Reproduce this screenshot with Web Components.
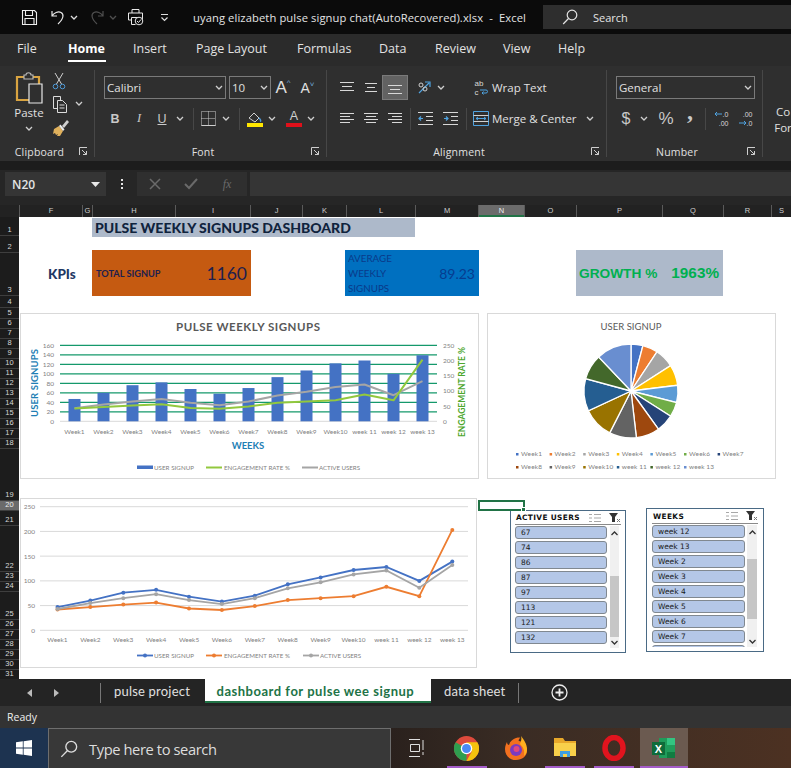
<!DOCTYPE html>
<html lang="en">
<head>
<meta charset="utf-8">
<title>Excel dashboard</title>
<style>
  html, body { margin: 0; height: 768px; overflow: hidden; background: #1e1e1e; font-family: "Open Sans", "Liberation Sans", sans-serif; }
</style>
</head>
<body>
<xl-title-bar></xl-title-bar>
<xl-menu-bar></xl-menu-bar>
<xl-ribbon></xl-ribbon>
<xl-formula-bar></xl-formula-bar>
<xl-column-heads></xl-column-heads>
<xl-sheet>
  <xl-slicer slot="slicer-a" heading="ACTIVE USERS" head-h="13" item-w="92" sb-gap="3" sb-w="9" thumb-top="50" thumb-h="61" pad="4">
    <xl-slicer-item>67</xl-slicer-item><xl-slicer-item>74</xl-slicer-item><xl-slicer-item>86</xl-slicer-item><xl-slicer-item>87</xl-slicer-item><xl-slicer-item>97</xl-slicer-item><xl-slicer-item>113</xl-slicer-item><xl-slicer-item>121</xl-slicer-item><xl-slicer-item>132</xl-slicer-item>
  </xl-slicer>
  <xl-slicer slot="slicer-b" heading="WEEKS" head-h="14" item-w="93" sb-gap="2" sb-w="10" thumb-top="34" thumb-h="60" pad="5">
    <xl-slicer-item>week 12</xl-slicer-item><xl-slicer-item>week 13</xl-slicer-item><xl-slicer-item>Week 2</xl-slicer-item><xl-slicer-item>Week 3</xl-slicer-item><xl-slicer-item>Week 4</xl-slicer-item><xl-slicer-item>Week 5</xl-slicer-item><xl-slicer-item>Week 6</xl-slicer-item><xl-slicer-item>Week 7</xl-slicer-item><xl-slicer-item></xl-slicer-item>
  </xl-slicer>
</xl-sheet>
<xl-sheet-tabs></xl-sheet-tabs>
<xl-status-bar></xl-status-bar>
<xl-taskbar></xl-taskbar>

<script>
const WEEKS = ["Week1","Week2","Week3","Week4","Week5","Week6","Week7","Week8","Week9","Week10","week 11","week 12","week 13"];
const SIGNUPS = [47,60,76,82,68,58,70,93,107,122,128,100,139];
const ENGAGE = [42,47,52,56,44,41,49,61,65,69,88,69,203];
const ACTIVE = [43,55,65,73,61,53,65,85,97,113,121,86,132];
const PIE_COLORS = ["#4472c4","#ed7d31","#a5a5a5","#ffc000","#5b9bd5","#70ad47","#264478","#9e480e","#636363","#997300","#255e91","#43682b","#698ed0"];
const CHART_FONT = `font-family="Lato, 'Liberation Sans', sans-serif"`;

const chev = (c = "#cfcfcf") => `<svg width="8" height="5" viewBox="0 0 8 5"><path d="M1 1l3 3 3-3" fill="none" stroke="${c}" stroke-width="1.3"/></svg>`;
const launcher = `<svg width="9" height="9" viewBox="0 0 9 9" fill="none" stroke="#cfcfcf"><path d="M.5 8V.5H8M3 3l4.5 4.5M7.5 4v3.5H4"/></svg>`;
const searchIcon = (s, c) => `<svg width="${s}" height="${s}" viewBox="0 0 16 16" fill="none" stroke="${c}" stroke-width="1.2"><circle cx="10" cy="6" r="4.8"/><path d="M6.5 9.5L1.2 15"/></svg>`;
const lines = (rows) => `<svg width="14" height="14" viewBox="0 0 14 14" stroke="#d8d8d8">${rows.map(([x1, x2, y]) => `<path d="M${x1} ${y}.5H${x2}"/>`).join("")}</svg>`;

// title bar: quick access icons, file name and search box
class XlTitleBar extends HTMLElement {
  constructor() { super(); this.attachShadow({ mode: "open" }); }
  connectedCallback() {
    this.shadowRoot.innerHTML = `
      <style>
        :host { display: flex; align-items: center; height: 34px; background: #0b0b0b; color: #e4e4e4; font-size: 11.2px; box-sizing: border-box; padding-left: 20px; overflow: hidden; }
        .c { display: flex; align-items: center; justify-content: center; flex: none; }
        .name { width: 350px; white-space: nowrap; letter-spacing: .1px; flex: none; }
        .search { flex: 1; height: 24px; background: #2e2e2e; display: flex; align-items: center; padding-left: 19px; gap: 15px; color: #e4e4e4; font-size: 11px; }
      </style>
      <span class="c" style="width:18px"><svg width="17" height="17" viewBox="0 0 17 17" fill="none" stroke="#eee" stroke-width="1.1"><path d="M1.5 1.5h12l2 2v12h-14zM4.5 1.5v5h7v-5M4 15.5v-6h9v6"/></svg></span>
      <span class="c" style="width:22px;margin-left:9px"><svg width="16" height="17" viewBox="0 0 16 17" fill="none" stroke="#e8e8e8" stroke-width="1.2"><path d="M2 2v5h5M2 7c2-3 6-5 9-3.500s3 6-3 11.500"/></svg></span>
      <span class="c" style="width:10px">${chev("#ddd")}</span>
      <span class="c" style="width:22px;margin-left:7px"><svg width="16" height="17" viewBox="0 0 16 17" fill="none" stroke="#4f4f4f" stroke-width="1.2"><path d="M14 2v5H9M14 7c-2-3-6-5-9-3.500S2 9.500 8 15"/></svg></span>
      <span class="c" style="width:10px">${chev("#4f4f4f")}</span>
      <span class="c" style="width:18px;margin-left:9px"><svg width="18" height="18" viewBox="0 0 18 18" fill="none" stroke="#e8e8e8"><path d="M5 5V1.500h7V5M1.500 5h14v7h-3M1.500 5v7h3M4.500 9.500h7"/><circle cx="12" cy="13" r="3.800" fill="#0b0b0b"/><path d="M10 13l1.500 1.500 2.500-3M4.500 9.500v7h4"/></svg></span>
      <span class="c" style="width:10px;margin-left:14px"><svg width="9" height="9" viewBox="0 0 9 9" fill="none" stroke="#ddd" stroke-width="1.200"><path d="M1 1.500h7M1.500 4.500l3 3 3-3"/></svg></span>
      <span class="name" style="margin-left:24px">uyang elizabeth pulse signup chat(AutoRecovered).xlsx &nbsp;-&nbsp; Excel</span>
      <div class="search"><span class="c">${searchIcon(16, "#e4e4e4")}</span><span>Search</span></div>
    `;
  }
}

// ribbon tab names
class XlMenuBar extends HTMLElement {
  constructor() { super(); this.attachShadow({ mode: "open" }); }
  connectedCallback() {
    const tabs = [["File", 51], ["Home", 65], ["Insert", 63], ["Page Layout", 101], ["Formulas", 82], ["Data", 56], ["Review", 68], ["View", 55], ["Help", 40]];
    this.shadowRoot.innerHTML = `
      <style>
        :host { display: flex; height: 32px; background: #2b2b2b; color: #e2e2e2; font-size: 12.5px; padding-left: 17px; box-sizing: border-box; }
        span { flex: none; line-height: 30px; white-space: nowrap; position: relative; }
        .on { font-weight: 700; color: #fff; }
        .on::after { content: ""; position: absolute; left: 0; width: 38px; top: 26px; height: 2px; background: #fff; }
      </style>
      ${tabs.map(([t, w]) => `<span style="width:${w}px" class="${t === "Home" ? "on" : ""}">${t}</span>`).join("")}
    `;
  }
}

// one group of the ribbon; the tools come in through the slot
class XlRibbonGroup extends HTMLElement {
  constructor() { super(); this.attachShadow({ mode: "open" }); }
  connectedCallback() {
    this.shadowRoot.innerHTML = `
      <style>
        :host { display: flex; flex-direction: column; flex: none; height: 95px; box-sizing: border-box; width: var(--w); position: relative; }
        :host::after { content: ""; position: absolute; right: 0; top: 4px; bottom: 4px; width: 1px; background: #474747; }
        .body { flex: 1; min-height: 0; padding-top: 10px; padding-left: var(--pad, 0); display: flex; flex-direction: column; gap: 8px; }
        .foot { display: grid; grid-template-columns: 1fr 16px; height: 19px; flex: none; box-sizing: border-box; padding-top: 3px; align-items: start; font-size: 10.5px; color: #e0e0e0; }
        .foot span { text-align: center; line-height: 14px; letter-spacing: .2px; }
        .foot i { display: block; line-height: 0; padding-top: 2px; }
      </style>
      <div class="body"><slot></slot></div>
      <div class="foot"><span>${this.getAttribute("label")}</span><i>${launcher}</i></div>
    `;
  }
}

class XlRibbon extends HTMLElement {
  constructor() { super(); this.attachShadow({ mode: "open" }); }
  connectedCallback() {
    const cell = (w, html = "", extra = "") => `<span class="c" style="width:${w}px;${extra}">${html}</span>`;
    const sep = (w) => `<span class="c" style="width:${w}px"><b class="sep"></b></span>`;
    const arrowBlue = `stroke="#4fa3e0" fill="none"`;
    this.shadowRoot.innerHTML = `
      <style>
        :host { display: flex; height: 95px; background: #2f2f2f; color: #e0e0e0; overflow: hidden; }
        .row { display: flex; align-items: center; height: 23px; font-size: 11.5px; white-space: nowrap; }
        .c { display: flex; align-items: center; justify-content: center; flex: none; height: 23px; }
        .sep { display: block; width: 1px; height: 22px; background: #474747; }
        .select { box-sizing: border-box; height: 23px; border: 1px solid #7a7a7a; display: flex; align-items: center; justify-content: space-between; padding: 0 2px; font-size: 11.5px; flex: none; }
        .clip { display: grid; grid-template-columns: 52px 34px; height: 66px; margin-top: -4px; }
        .paste { display: flex; flex-direction: column; align-items: center; padding-left: 6px; font-size: 11.5px; }
        .paste span { margin: 1px 0 5px; line-height: 16px; }
        .clip-tools { display: flex; flex-direction: column; align-items: flex-start; gap: 2px; margin-top: -2px; }
        .clip-tools div { display: flex; align-items: center; gap: 6px; height: 21px; }
        .bar { position: relative; display: flex; flex-direction: column; align-items: center; line-height: 1; }
        .a { font-family: "Liberation Sans", sans-serif; }
        .more { font-size: 11.5px; line-height: 16px; padding-top: 38px; flex: none; width: 40px; text-align: center; white-space: nowrap; }
        .mini { font-family: "Liberation Sans", sans-serif; font-size: 7px; line-height: 9px; display: block; text-align: right; color: #d8d8d8; }
      </style>
      <xl-ribbon-group style="--w:95px" label="Clipboard">
        <div class="clip">
          <div class="paste">
            <svg width="28" height="32" viewBox="0 0 28 32" fill="none">
              <path d="M2 5h22v23H2z" stroke="#d9a441" stroke-width="2.200"/>
              <path d="M9 7V3h2c0-3 5-3 5 0h2v4z" fill="#2f2f2f" stroke="#b8b8b8" stroke-width="1.200"/>
              <path d="M14 12h13v19H14z" fill="#2f2f2f" stroke="#e8e8e8" stroke-width="1.200"/>
            </svg>
            <span>Paste</span>${chev()}
          </div>
          <div class="clip-tools">
            <div><svg width="14" height="18" viewBox="0 0 14 18" fill="none" stroke="#cfcfcf"><path d="M3 1l6.500 11M11 1L4.500 12"/><circle cx="3.500" cy="14.500" r="2.300" stroke="#4f9bd9"/><circle cx="10.500" cy="14.500" r="2.300" stroke="#4f9bd9"/></svg></div>
            <div><svg width="17" height="18" viewBox="0 0 17 18" fill="none" stroke="#dcdcdc"><path d="M5 13.500H1.500v-12h7V5M5.500 5.500h5l4 4v8h-9zM7.500 10h5M7.500 13h5"/></svg>${chev()}</div>
            <div><svg width="18" height="18" viewBox="0 0 18 18"><path d="M2 11l5-3 4 5-3 5H5l1-2-2 1-1-2-2 1z" fill="#e0b15c"/><path d="M7 8l4 5 1.500-1.500-4-5z" fill="#eee"/><path d="M10 8l5-6 2 2-5 6z" fill="#d0d0d0"/></svg></div>
          </div>
        </div>
      </xl-ribbon-group>

      <xl-ribbon-group style="--w:232px;--pad:9px" label="Font">
        <div class="row">
          <div class="select" style="width:122px"><span>Calibri</span>${chev()}</div>
          <span style="width:3px"></span>
          <div class="select" style="width:42px"><span>10</span>${chev()}</div>
          ${cell(24, `<span class="a" style="font-size:17px">A<sup style="font-size:8px;color:#6fa8d8;vertical-align:8px">^</sup></span>`)}
          ${cell(25, `<span class="a" style="font-size:14px">A<sup style="font-size:8px;color:#6fa8d8;vertical-align:6px">˅</sup></span>`)}
        </div>
        <div class="row" style="margin-left:-1px">
          ${cell(24, `<b class="a" style="font-size:12.500px;color:#c9c9c9">B</b>`)}
          ${cell(24, `<i style="font:italic 12.500px 'Liberation Serif',serif;color:#c9c9c9">I</i>`)}
          ${cell(22, `<span class="a" style="font-size:12.500px;text-decoration:underline;color:#c9c9c9">U</span>`)}
          ${cell(14, chev())}${sep(12)}
          ${cell(18, `<svg width="15" height="15" viewBox="0 0 15 15" fill="none" stroke="#cfcfcf" stroke-dasharray="1 1"><path d="M.5.500h14v14H.500zM7.500.500v14M.500 7.500h14"/><path d="M.5 14.500h14" stroke-dasharray="none"/></svg>`)}
          ${cell(18, chev())}${sep(8)}
          ${cell(24, `<svg width="16" height="17" viewBox="0 0 16 17"><path d="M2 8l5-5 5 5-4 4z" fill="none" stroke="#d0d0d0"/><path d="M12 8c2 2 2 3 1 3.500" fill="none" stroke="#4f9bd9" stroke-width="1.500"/><rect y="13" width="16" height="4" fill="#ffe600"/></svg>`)}
          ${cell(10, chev())}${cell(5)}
          ${cell(24, `<span class="bar a" style="font-size:12.500px;color:#d0d0d0">A<i style="display:block;width:16px;height:4px;background:#e0101a;margin-top:1px"></i></span>`)}
          ${cell(10, chev())}
        </div>
      </xl-ribbon-group>

      <xl-ribbon-group style="--w:280px;--pad:8px" label="Alignment">
        <div class="row">
          ${cell(24, lines([[0, 14, 1], [2, 12, 5], [0, 14, 9]]))}
          ${cell(24, lines([[1, 13, 2], [3, 11, 6], [1, 13, 10]]))}
          ${cell(24, lines([[0, 14, 4], [2, 12, 8], [0, 14, 12]]), "background:#626262;outline:1px solid #7a7a7a")}
          ${cell(8)}
          ${cell(20, `<svg width="17" height="16" viewBox="0 0 17 16" fill="none"><path d="M2 13L12 3M8 2h5v5" stroke="#4fa3e0" stroke-width="1.200"/><circle cx="4" cy="5" r="2" stroke="#d0d0d0"/><circle cx="8" cy="9" r="2" stroke="#d0d0d0"/></svg>`)}
          ${cell(12, chev())}
          ${cell(25)}
          ${cell(18, `<span class="mini" style="font-size:8px;line-height:9px;text-align:left">ab<br>c<svg width="9" height="7" viewBox="0 0 9 7" ${arrowBlue}><path d="M1 2h6a1.500 1.500 0 0 1 0 3H3M4.500 3.500L3 5l1.500 1.500"/></svg></span>`)}
          <span style="margin-left:2px">Wrap Text</span>
        </div>
        <div class="row">
          ${cell(24, lines([[0, 14, 1], [0, 10, 4], [0, 14, 7], [0, 10, 10]]))}
          ${cell(24, lines([[0, 14, 1], [2, 12, 4], [0, 14, 7], [2, 12, 10]]))}
          ${cell(24, lines([[0, 14, 1], [4, 14, 4], [0, 14, 7], [4, 14, 10]]))}
          ${sep(6)}
          ${cell(24, `<svg width="15" height="13" viewBox="0 0 15 13" fill="none" stroke="#d8d8d8"><path d="M0 .5h15M8 4.500h7M8 8.500h7M0 12.500h15"/><path d="M5 6.500H1M3 4.500l-2 2 2 2" stroke="#4fa3e0" stroke-width="1.200"/></svg>`)}
          ${cell(1)}
          ${cell(24, `<svg width="15" height="13" viewBox="0 0 15 13" fill="none" stroke="#d8d8d8"><path d="M0 .5h15M8 4.500h7M8 8.500h7M0 12.500h15"/><path d="M1 6.500h4M3 4.500l2 2-2 2" stroke="#4fa3e0" stroke-width="1.200"/></svg>`)}
          ${sep(8)}
          ${cell(2)}
          ${cell(18, `<svg width="16" height="15" viewBox="0 0 16 15" fill="none"><path d="M.5.500h15v14H.500z" stroke="#4fa3e0"/><path d="M.5 4.500h15M.5 10.500h15" stroke="#d0d0d0"/><path d="M3 7.500h10M5 6l-2 1.500L5 9M11 6l2 1.500L11 9" stroke="#4fa3e0"/></svg>`)}
          <span style="margin-left:2px;width:94px">Merge &amp; Center</span>${chev()}
        </div>
      </xl-ribbon-group>

      <xl-ribbon-group style="--w:156px;--pad:9px" label="Number">
        <div class="row"><div class="select" style="width:139px"><span>General</span>${chev()}</div></div>
        <div class="row">
          ${cell(20, `<span class="a" style="font-size:16px;color:#c9c9c9">$</span>`)}
          ${cell(16, chev())}${cell(2)}
          ${cell(24, `<span class="a" style="font-size:17px;color:#c9c9c9">%</span>`)}
          ${cell(24, `<b style="font:700 24px/1 'Liberation Serif',serif;color:#c9c9c9;transform:translateY(-8px)">,</b>`)}
          ${sep(6)}${cell(1)}
          ${cell(24, `<span class="mini"><svg width="9" height="6" viewBox="0 0 9 6" ${arrowBlue}><path d="M8 3H1M3 1L1 3l2 2"/></svg>.0<br>.00</span>`)}
          ${cell(24, `<span class="mini">.00<br><svg width="9" height="6" viewBox="0 0 9 6" ${arrowBlue}><path d="M1 3h7M6 1l2 2-2 2"/></svg>.0</span>`)}
        </div>
      </xl-ribbon-group>
      <div class="more">Co<br>For</div>
    `;
  }
}

class XlFormulaBar extends HTMLElement {
  constructor() { super(); this.attachShadow({ mode: "open" }); }
  connectedCallback() {
    this.shadowRoot.innerHTML = `
      <style>
        :host { display: flex; height: 44px; box-sizing: border-box; padding: 11px 0 9px 5px; background: linear-gradient(#1c1c1c 0 9px, #262626 9px); color: #e4e4e4; }
        .name { width: 101px; box-sizing: border-box; background: #353535; display: flex; align-items: center; justify-content: space-between; padding: 0 6px 0 7px; font-size: 12px; font-weight: 600; }
        .dots { width: 31px; display: flex; flex-direction: column; align-items: center; justify-content: center; gap: 2px; }
        .dots i { width: 2px; height: 2px; background: #e4e4e4; }
        .btns { width: 110px; background: #2f2f2f; display: flex; align-items: center; gap: 0; color: #6a6a6a; }
        .btns span { width: 36px; display: flex; justify-content: center; }
        .input { flex: 1; margin-left: 3px; background: #353535; }
      </style>
      <div class="name"><span>N20</span><svg width="9" height="5" viewBox="0 0 9 5"><path d="M0 0h9L4.500 5z" fill="#e8e8e8"/></svg></div>
      <div class="dots"><i></i><i></i><i></i></div>
      <div class="btns">
        <span><svg width="12" height="12" viewBox="0 0 12 12" stroke="#6a6a6a" stroke-width="1.500"><path d="M1 1l10 10M11 1L1 11"/></svg></span>
        <span><svg width="14" height="12" viewBox="0 0 14 12" fill="none" stroke="#6a6a6a" stroke-width="2"><path d="M1 6l4 4 8-9"/></svg></span>
        <span style="font:italic 12px 'Liberation Serif',serif">fx</span>
      </div>
      <div class="input"></div>
    `;
  }
}

class XlColumnHeads extends HTMLElement {
  constructor() { super(); this.attachShadow({ mode: "open" }); }
  connectedCallback() {
    const cols = [["F", 63], ["G", 10], ["H", 83], ["I", 75], ["J", 52], ["K", 44], ["L", 69], ["M", 63], ["N", 46], ["O", 52], ["P", 86], ["Q", 61], ["R", 48], ["S", 20]];
    this.shadowRoot.innerHTML = `
      <style>
        :host { display: flex; height: 12px; background: #222; color: #cfcfcf; font: 7.5px/12px "Liberation Sans", sans-serif; overflow: hidden; }
        .corner { width: 19px; flex: none; }
        span { flex: none; text-align: center; box-sizing: border-box; border-left: 1px solid #5a5a5a; }
        .on { background: #6b6b6b; color: #eee; box-shadow: inset 0 -2px #217346; }
      </style>
      <div class="corner"></div>
      ${cols.map(([c, w]) => `<span style="width:${w}px" class="${c === "N" ? "on" : ""}">${c}</span>`).join("")}
    `;
  }
}

class XlRowHeads extends HTMLElement {
  constructor() { super(); this.attachShadow({ mode: "open" }); }
  connectedCallback() {
    const h = [19, 17, 43, 12, 11, 10, 10, 10, 10, 10, 10, 10, 10, 10, 10, 10, 10, 10, 52, 10, 15, 46, 10, 10, 28, 10, 10, 10, 10, 10, 10];
    this.shadowRoot.innerHTML = `
      <style>
        :host { display: flex; flex-direction: column; width: 19px; flex: none; background: #1c1c1c; color: #d8d8d8; font: 7.5px/10px "Liberation Sans", sans-serif; overflow: hidden; }
        span { display: flex; align-items: flex-end; justify-content: center; flex: none; box-sizing: border-box; border-bottom: 1px solid #3e3e3e; }
        .on { background: #6b6b6b; color: #eee; }
      </style>
      ${h.map((v, i) => `<span style="height:${v}px" class="${i === 19 ? "on" : ""}">${i + 1}</span>`).join("")}
    `;
  }
}

// worksheet: title cell, KPI cells, charts and slicers
class XlSheet extends HTMLElement {
  constructor() { super(); this.attachShadow({ mode: "open" }); }
  connectedCallback() {
    this.shadowRoot.innerHTML = `
      <style>
        :host { display: flex; height: 462px; overflow: hidden; font-family: Lato, "Liberation Sans", sans-serif; }
        .body { flex: 1; background: #fff; position: relative; min-width: 0; }
        .title { margin: 1px 0 0 73px; width: 323px; height: 19px; background: #adb9ca; color: #10233d; font-weight: 900; font-size: 14px; line-height: 19px; padding-left: 3px; box-sizing: border-box; white-space: nowrap; }
        .kpis { display: flex; margin-top: 13px; height: 46px; }
        .label { width: 73px; padding-left: 29px; box-sizing: border-box; color: #1f3864; font-weight: 900; font-size: 13.500px; line-height: 48px; }
        .card { box-sizing: border-box; display: flex; align-items: center; justify-content: space-between; flex: none; }
        .orange { width: 159px; background: #c55a11; padding: 0 4px; color: #20204e; font-size: 9.200px; font-weight: 700; }
        .orange b { font-size: 17.500px; font-weight: 400; }
        .blue { width: 134px; margin-left: 94px; background: #0070c0; padding: 0 4px 0 3px; color: #0a3a8a; font-size: 9.800px; line-height: 15px; }
        .blue b { font-size: 14px; font-weight: 400; color: #063c90; }
        .grey { width: 147px; margin-left: 97px; background: #adb9ca; padding: 0 4px 0 3px; color: #00b050; font: 700 13.700px "Liberation Sans", sans-serif; }
        .grey span + span { font-size: 15.300px; }
        .charts { display: flex; margin: 17px 0 0 1px; gap: 8px; height: 166px; }
        .lower { display: flex; align-items: flex-start; margin: 19px 0 0 1px; }
        ::slotted([slot="slicer-a"]) { margin: 12px 0 0 33px; width: 116px; height: 143px; }
        ::slotted([slot="slicer-b"]) { margin: 10px 0 0 20px; width: 118px; height: 144px; }
        .cursor { position: absolute; left: 459px; top: 283px; width: 47px; height: 11px; box-sizing: border-box; border: 2px solid #217346; }
        .cursor::after { content: ""; position: absolute; right: -3px; bottom: -3px; width: 3px; height: 3px; background: #217346; border: 1px solid #fff; }
      </style>
      <xl-row-heads></xl-row-heads>
      <div class="body">
        <div class="title">PULSE WEEKLY SIGNUPS DASHBOARD</div>
        <div class="kpis">
          <div class="label">KPIs</div>
          <div class="card orange"><span>TOTAL SIGNUP</span><b>1160</b></div>
          <div class="card blue"><span>AVERAGE<br>WEEKLY<br>SIGNUPS</span><b>89.23</b></div>
          <div class="card grey"><span>GROWTH %</span><span>1963%</span></div>
        </div>
        <div class="charts">
          <xl-combo-chart></xl-combo-chart>
          <xl-pie-chart></xl-pie-chart>
        </div>
        <div class="lower">
          <xl-line-chart></xl-line-chart>
          <slot name="slicer-a"></slot>
          <slot name="slicer-b"></slot>
        </div>
        <div class="cursor"></div>
      </div>
    `;
  }
}

// bars on the left axis, two lines on the right axis. Page coordinates through the viewBox.
class XlComboChart extends HTMLElement {
  constructor() { super(); this.attachShadow({ mode: "open" }); }
  connectedCallback() {
    const base = 421.3, top = 345.3, step = 29, x0 = 60;
    const cx = (i) => x0 + step * (i + .5);
    const yL = (v) => base - (base - top) * v / 160;
    const yR = (v) => base - (base - top) * v / 250;
    const poly = (data, col) => `<polyline points="${data.map((v, i) => `${cx(i)},${yR(v).toFixed(1)}`).join(" ")}" fill="none" stroke="${col}" stroke-width="2" stroke-linejoin="round"/>`;
    let grid = "", left = "", right = "";
    for (let v = 0; v <= 160; v += 20) {
      grid += `<path d="M60 ${yL(v)}H437" stroke="${v ? "#14996b" : "#d9d9d9"}" stroke-width="${v ? 1.3 : 1}"/>`;
      left += `<text x="54" y="${yL(v) + 2.5}" text-anchor="end">${v}</text>`;
    }
    for (let v = 0; v <= 250; v += 50) right += `<text x="443" y="${yR(v) + 2.5}">${v}</text>`;
    this.shadowRoot.innerHTML = `
      <style>:host { display: block; width: 459px; height: 166px; flex: none; } svg { display: block; }</style>
      <svg width="459" height="166" viewBox="20 313 459 166" ${CHART_FONT}>
        <rect x="20.500" y="313.500" width="458" height="165" fill="#fff" stroke="#d9d9d9"/>
        <text x="248" y="331" text-anchor="middle" font-size="11.500" font-weight="700" fill="#595959" textLength="144">PULSE WEEKLY SIGNUPS</text>
        ${grid}
        ${SIGNUPS.map((v, i) => `<rect x="${cx(i) - 6}" y="${yL(v)}" width="12" height="${base - yL(v)}" fill="#4472c4"/>`).join("")}
        ${poly(ACTIVE, "#a5a5a5")}${poly(ENGAGE, "#92c83e")}
        <g font-size="6.500" fill="#7f7f7f">${left}${right}
          ${WEEKS.map((w, i) => `<text x="${cx(i)}" y="433.500" text-anchor="middle">${w}</text>`).join("")}
        </g>
        <text transform="translate(38 383) rotate(-90)" text-anchor="middle" font-size="9.500" font-weight="700" fill="#1f7fb5" textLength="68">USER SIGNUPS</text>
        <text transform="translate(465 392) rotate(-90)" text-anchor="middle" font-size="8.500" font-weight="700" fill="#4ea72e" textLength="90">ENGAGEMENT RATE %</text>
        <text x="248" y="449" text-anchor="middle" font-size="9.500" font-weight="700" fill="#1f7fb5">WEEKS</text>
        <g font-size="6.200" fill="#7f7f7f">
          <rect x="137" y="465.500" width="16" height="3.500" fill="#4472c4"/><text x="154" y="469.500" textLength="40">USER SIGNUP</text>
          <path d="M206 467.500h16" stroke="#92c83e" stroke-width="2"/><text x="224" y="469.500" textLength="66">ENGAGEMENT RATE %</text>
          <path d="M302 467.500h16" stroke="#a5a5a5" stroke-width="2"/><text x="319" y="469.500" textLength="41">ACTIVE USERS</text>
        </g>
      </svg>
    `;
  }
}

class XlPieChart extends HTMLElement {
  constructor() { super(); this.attachShadow({ mode: "open" }); }
  connectedCallback() {
    const total = SIGNUPS.reduce((a, b) => a + b, 0);
    const cx = 631, cy = 391, r = 47;
    let ang = 0;
    const slices = SIGNUPS.map((v, i) => {
      const a0 = ang, a1 = ang + v / total * Math.PI * 2;
      ang = a1;
      const p = (a) => `${(cx + r * Math.sin(a)).toFixed(2)} ${(cy - r * Math.cos(a)).toFixed(2)}`;
      return `<path d="M${cx} ${cy}L${p(a0)}A${r} ${r} 0 0 1 ${p(a1)}Z" fill="${PIE_COLORS[i]}" stroke="#fff" stroke-width="1.300"/>`;
    }).join("");
    const legend = WEEKS.map((w, i) => {
      const x = 517 + 33.6 * (i % 7), y = i < 7 ? 454 : 467;
      return `<rect x="${x - 1}" y="${y - 1}" width="2.500" height="2.500" fill="${PIE_COLORS[i]}"/><text x="${x + 4}" y="${y + 2.2}" textLength="${w.length > 5 ? 25 : 21}">${w}</text>`;
    }).join("");
    this.shadowRoot.innerHTML = `
      <style>:host { display: block; width: 289px; height: 166px; flex: none; } svg { display: block; }</style>
      <svg width="289" height="166" viewBox="487 313 289 166" ${CHART_FONT}>
        <rect x="487.500" y="313.500" width="288" height="165" fill="#fff" stroke="#d9d9d9"/>
        <text x="631" y="329.500" text-anchor="middle" font-size="9.500" fill="#595959" textLength="61">USER SIGNUP</text>
        ${slices}
        <g font-size="6.500" fill="#7f7f7f">${legend}</g>
      </svg>
    `;
  }
}

class XlLineChart extends HTMLElement {
  constructor() { super(); this.attachShadow({ mode: "open" }); }
  connectedCallback() {
    const base = 630.3, perUnit = 24.72 / 50, x0 = 40, step = 32.9;
    const cx = (i) => x0 + step * (i + .5) + 1;
    const y = (v) => base - v * perUnit;
    const series = (data, col) => `<polyline points="${data.map((v, i) => `${cx(i).toFixed(1)},${y(v).toFixed(1)}`).join(" ")}" fill="none" stroke="${col}" stroke-width="1.800"/>` +
      data.map((v, i) => `<circle cx="${cx(i).toFixed(1)}" cy="${y(v).toFixed(1)}" r="2" fill="${col}"/>`).join("");
    let grid = "";
    for (let v = 0; v <= 250; v += 50) {
      grid += `<path d="M40 ${y(v)}H468" stroke="#d9d9d9"/><text x="35" y="${y(v) + 2.5}" text-anchor="end" font-size="6.500" fill="#7f7f7f">${v}</text>`;
    }
    const key = (x, col) => `<path d="M${x} 655.500h16" stroke="${col}" stroke-width="1.800"/><circle cx="${x + 8}" cy="655.500" r="2" fill="${col}"/>`;
    this.shadowRoot.innerHTML = `
      <style>:host { display: block; width: 457px; height: 170px; flex: none; } svg { display: block; }</style>
      <svg width="457" height="170" viewBox="20 498 457 170" ${CHART_FONT}>
        <rect x="20.500" y="498.500" width="456" height="169" fill="#fff" stroke="#d9d9d9"/>
        ${grid}
        ${series(SIGNUPS, "#4472c4")}${series(ENGAGE, "#ed7d31")}${series(ACTIVE, "#a5a5a5")}
        <g font-size="6.500" fill="#7f7f7f">
          ${WEEKS.map((w, i) => `<text x="${cx(i)}" y="642" text-anchor="middle">${w}</text>`).join("")}
        </g>
        <g font-size="6.200" fill="#7f7f7f">
          ${key(137, "#4472c4")}<text x="154" y="657.700" textLength="40">USER SIGNUP</text>
          ${key(206, "#ed7d31")}<text x="224" y="657.700" textLength="66">ENGAGEMENT RATE %</text>
          ${key(303, "#a5a5a5")}<text x="320" y="657.700" textLength="41">ACTIVE USERS</text>
        </g>
      </svg>
    `;
  }
}

class XlSlicerItem extends HTMLElement {
  constructor() { super(); this.attachShadow({ mode: "open" }); }
  connectedCallback() {
    this.shadowRoot.innerHTML = `
      <style>
        :host { display: block; flex: none; height: 13px; box-sizing: border-box; background: #b4c7e7; border: 1px solid #808890; border-radius: 3px; padding-left: 5px; font: 7.500px/11px "DejaVu Sans", sans-serif; color: #1a1a1a; }
      </style>
      <slot></slot>
    `;
  }
}

class XlSlicer extends HTMLElement {
  constructor() { super(); this.attachShadow({ mode: "open" }); }
  connectedCallback() {
    const a = (n) => this.getAttribute(n);
    this.shadowRoot.innerHTML = `
      <style>
        :host { display: flex; flex-direction: column; flex: none; box-sizing: border-box; background: #fff; border: 1px solid #4a6a85; padding: 0 ${a("pad")}px 0; overflow: hidden; }
        header { display: flex; align-items: center; height: ${a("head-h")}px; flex: none; border-bottom: 1px solid #8a8a8a; font: 700 7.400px "DejaVu Sans", sans-serif; letter-spacing: .35px; color: #111; white-space: nowrap; padding-left: 1px; }
        header span { flex: 1; }
        header svg { flex: none; margin-left: 8px; }
        .main { display: flex; flex: none; height: 123px; padding-top: 1px; box-sizing: border-box; }
        .list { width: ${a("item-w")}px; display: flex; flex-direction: column; gap: 2px; flex: none; overflow: hidden; }
        .bar { width: ${a("sb-w")}px; margin-left: ${a("sb-gap")}px; background: #f0f0f0; height: 122px; position: relative; flex: none; }
        .thumb { margin-top: ${a("thumb-top")}px; height: ${a("thumb-h")}px; background: #c6c6c6; }
        .bar svg { position: absolute; left: 50%; margin-left: -3.500px; }
        .up { top: 5px; } .dn { bottom: 3px; }
      </style>
      <header>
        <span>${a("heading")}</span>
        <svg width="12" height="10" viewBox="0 0 12 10" fill="none" stroke="#a8a8a8"><path d="M5 1.500h7M5 5h7M5 8.500h7M0 1.500h3M0 5h3M0 8.500h3"/></svg>
        <svg width="12" height="10" viewBox="0 0 12 10"><path d="M0 0h9L6 4v5H3V4z" fill="#333"/><path d="M8 6l3 3M11 6L8 9" stroke="#777"/></svg>
      </header>
      <div class="main">
        <div class="list"><slot></slot></div>
        <div class="bar">
          <div class="thumb"></div>
          <svg class="up" width="7" height="5" viewBox="0 0 7 5" fill="none" stroke="#333" stroke-width="1.300"><path d="M.5 4l3-3 3 3"/></svg>
          <svg class="dn" width="7" height="5" viewBox="0 0 7 5" fill="none" stroke="#333" stroke-width="1.300"><path d="M.5 1l3 3 3-3"/></svg>
        </div>
      </div>
    `;
  }
}

class XlSheetTabs extends HTMLElement {
  constructor() { super(); this.attachShadow({ mode: "open" }); }
  connectedCallback() {
    this.shadowRoot.innerHTML = `
      <style>
        :host { display: flex; align-items: stretch; height: 27px; background: #242424; color: #e0e0e0; font: 13px/24px Lato, "Open Sans", sans-serif; letter-spacing: .2px; box-sizing: border-box; }
        .nav { width: 100px; display: flex; gap: 21px; padding-left: 27px; box-sizing: border-box; align-items: center; }
        .sep { width: 1px; height: 20px; background: #777; align-self: center; flex: none; }
        .tab { flex: none; white-space: nowrap; }
        .on { background: #fff; color: #217346; font-weight: 700; height: 24px; border-bottom: 2px solid #217346; width: 226.500px; padding-left: 12px; box-sizing: border-box; letter-spacing: .52px; }
        .plus { margin-left: 32px; align-self: center; display: flex; }
      </style>
      <div class="nav">
        <svg width="6" height="8" viewBox="0 0 6 8"><path d="M5 0v8L0 4z" fill="#bbb"/></svg>
        <svg width="6" height="8" viewBox="0 0 6 8"><path d="M0 0v8l5-4z" fill="#bbb"/></svg>
      </div>
      <div class="sep"></div>
      <div class="tab" style="width:103.500px;padding-left:13px;box-sizing:border-box">pulse project</div>
      <div class="tab on">dashboard for pulse wee signup</div>
      <div class="tab" style="width:87px;padding-left:13px;box-sizing:border-box">data sheet</div>
      <div class="sep"></div>
      <div class="plus"><svg width="17" height="17" viewBox="0 0 17 17" fill="none" stroke="#eee" stroke-width="1.300"><circle cx="8.500" cy="8.500" r="7.500"/><path d="M4.500 8.500h8M8.500 4.500v8" stroke-width="1.800"/></svg></div>
    `;
  }
}

class XlStatusBar extends HTMLElement {
  constructor() { super(); this.attachShadow({ mode: "open" }); }
  connectedCallback() {
    this.shadowRoot.innerHTML = `
      <style>:host { display: block; height: 22px; background: #333; color: #eee; font-size: 10.500px; line-height: 22px; padding-left: 7px; }</style>
      Ready
    `;
  }
}

// Windows taskbar with the pinned apps
class XlTaskbar extends HTMLElement {
  constructor() { super(); this.attachShadow({ mode: "open" }); }
  connectedCallback() {
    const chrome = `<svg width="25" height="25" viewBox="0 0 24 24"><circle cx="12" cy="12" r="12" fill="#dd4a3c"/><path d="M12 12L1.600 6A12 12 0 0 0 12 24z" fill="#2f9e4f"/><path d="M12 6h10.400A12 12 0 0 1 12 24l5-9z" fill="#f4c20d"/><circle cx="12" cy="12" r="5.500" fill="#fff"/><circle cx="12" cy="12" r="4.300" fill="#4a8af4"/></svg>`;
    const firefox = `<svg width="24" height="26" viewBox="0 0 24 26"><path d="M12 25C5 25 1 20 1 14c0-3 1-5 2-7 0 2 1 3 2 3 1-4 4-6 7-7 8-2 1 2 3 3 5 1 8 5 8 10 0 5-5 9-11 9z" fill="#f2701f"/><path d="M17 1c3 4 6 8 6 13 0 3-1 5-3 7 1-6-1-9-4-12 1-3 2-5 1-8z" fill="#ffb11f"/><circle cx="12" cy="15" r="6" fill="#7a3bc0"/><circle cx="12.500" cy="14" r="3" fill="#e0487e"/></svg>`;
    const folder = `<svg width="24" height="24" viewBox="0 0 24 24"><path d="M1 2h9l2 3h11v4H1z" fill="#e8a82a"/><path d="M1 7h22v13H1z" fill="#f8d04a"/><path d="M7 15h10v6H7z" fill="#3f9fe0"/><path d="M10 18h4v3h-4z" fill="#f8d04a"/></svg>`;
    const opera = `<svg width="24" height="26" viewBox="0 0 24 26" fill="none"><ellipse cx="12" cy="13" rx="9" ry="10.500" stroke="#e0141e" stroke-width="5.500"/></svg>`;
    const excel = `<svg width="24" height="24" viewBox="0 0 24 24"><path d="M7 2h16v20H7z" fill="#1f9c5a"/><path d="M15 2h8v7h-8z" fill="#33c481"/><path d="M15 16h8v6h-8z" fill="#107c41"/><path d="M0 6h13v13H0z" fill="#0e6b3a"/><text x="6.500" y="16.500" text-anchor="middle" font-family="Liberation Sans" font-weight="700" font-size="11" fill="#fff">X</text></svg>`;
    this.shadowRoot.innerHTML = `
      <style>
        :host { display: flex; height: 40px; background: linear-gradient(90deg, #2a211d 391px, #3a2c24 520px, #4c3122 791px); color: #ddd; position: relative; overflow: hidden; }
        .start { width: 48px; background: #1d3350; display: flex; align-items: center; justify-content: center; flex: none; }
        .search { width: 343px; box-sizing: border-box; background: #383838; border: 1px solid #6e6e6e; border-bottom: 0; display: flex; align-items: center; gap: 11px; padding-left: 11px; font: 14.700px "Open Sans", sans-serif; letter-spacing: -.4px; flex: none; }
        .app { width: 49px; display: flex; align-items: center; justify-content: center; flex: none; position: relative; }
        .app.run::after { content: ""; position: absolute; left: 5px; right: 4px; bottom: 0; height: 2px; background: #a45cc8; }
        .app.xl { background: #6b5a50; width: 48px; margin-left: 2px; }
        .app.xl::after { left: 0; right: 0; }
      </style>
      <div class="start"><svg width="16" height="16" viewBox="0 0 16 16" fill="#fff"><path d="M0 2.300l6.800-1v6.200H0zM7.600 1.200L16 0v7.500H7.600zM0 8.400h6.800v6.300l-6.800-1zM7.600 8.400H16V16l-8.400-1.200z"/></svg></div>
      <div class="search">${searchIcon(18, "#ddd")}<span>Type here to search</span></div>
      <div class="app" style="width:51px"><svg width="16" height="18" viewBox="0 0 16 18" fill="none" stroke="#e0e0e0"><path d="M0 .5h11M0 17.500h11M1.500 5.500h9v7h-9zM14 1v10M14 13v3" /></svg></div>
      <div class="app run">${chrome}</div>
      <div class="app">${firefox}</div>
      <div class="app run">${folder}</div>
      <div class="app run">${opera}</div>
      <div class="app run xl">${excel}</div>
    `;
  }
}

customElements.define("xl-title-bar", XlTitleBar);
customElements.define("xl-menu-bar", XlMenuBar);
customElements.define("xl-ribbon-group", XlRibbonGroup);
customElements.define("xl-ribbon", XlRibbon);
customElements.define("xl-formula-bar", XlFormulaBar);
customElements.define("xl-column-heads", XlColumnHeads);
customElements.define("xl-row-heads", XlRowHeads);
customElements.define("xl-sheet", XlSheet);
customElements.define("xl-combo-chart", XlComboChart);
customElements.define("xl-pie-chart", XlPieChart);
customElements.define("xl-line-chart", XlLineChart);
customElements.define("xl-slicer-item", XlSlicerItem);
customElements.define("xl-slicer", XlSlicer);
customElements.define("xl-sheet-tabs", XlSheetTabs);
customElements.define("xl-status-bar", XlStatusBar);
customElements.define("xl-taskbar", XlTaskbar);
</script>
</body>
</html>
